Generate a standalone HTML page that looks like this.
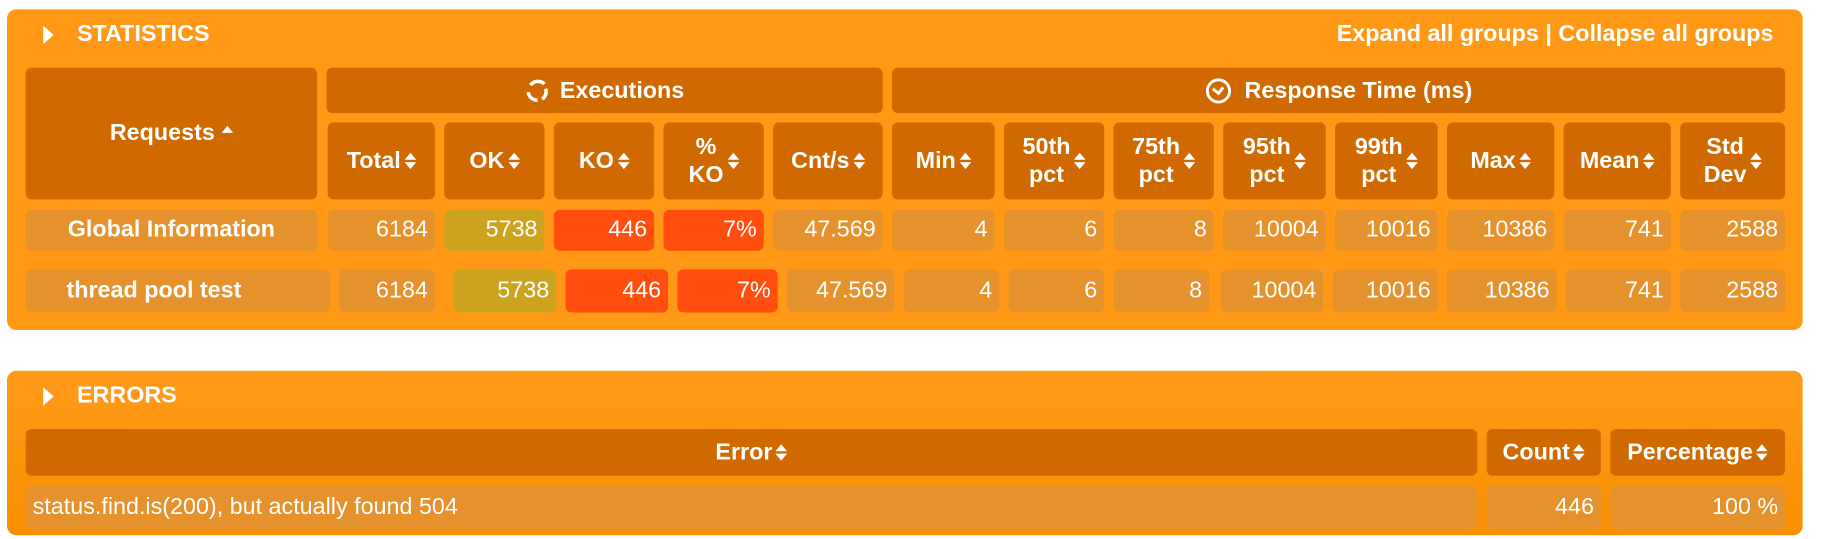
<!DOCTYPE html>
<html><head><meta charset="utf-8"><style>
html,body{margin:0;padding:0;background:#fff;width:1832px;height:538px;overflow:hidden}
#w{position:absolute;left:0;top:0;width:1572px;height:462px;transform:scale(1.166);transform-origin:0 0;font-family:"Liberation Sans",Arial,sans-serif;color:#fff}
.p{position:absolute;background:#ff9915;border-radius:8px}
.c{position:absolute;border-radius:5px;display:flex;align-items:center;box-sizing:border-box;font-size:20px;white-space:nowrap}
.h{background:#d06a00;font-weight:bold;justify-content:center;text-align:center;line-height:24px}
.d{background:#e5922c;justify-content:flex-end;padding-right:6px}
.ok{background:#cba31f}.ko{background:#ff4e0d}
.t{position:absolute;font-weight:bold;font-size:20px}
.s{display:inline-block;width:10px;height:14px;vertical-align:-1px;margin-left:3px;position:relative}
.s:before{content:"";position:absolute;left:0;top:0;border:5px solid transparent;border-top:0;border-bottom:6px solid #fff}
.s:after{content:"";position:absolute;left:0;top:8px;border:5px solid transparent;border-bottom:0;border-top:6px solid #fff}
.tri{position:absolute;width:0;height:0;border-top:8px solid transparent;border-bottom:8px solid transparent;border-left:9px solid #fff}
</style></head><body><div id="w">
<div class="p" style="left:6px;top:8px;width:1540px;height:275px"></div>
<div class="tri" style="left:37px;top:22px"></div>
<div class="t" style="left:66px;top:18px">STATISTICS</div>
<div class="t" style="right:51px;top:18px">Expand all groups | Collapse all groups</div>

<div class="c h" style="left:22px;top:58px;width:250px;height:113px;align-items:flex-start;padding-top:44px">Requests&nbsp;<span style="display:inline-block;border:5px solid transparent;border-top:0;border-bottom:6px solid #fff;margin-top:6px"></span></div>
<div class="c h" style="left:280px;top:58px;width:477px;height:39px"><svg width="22" height="22" viewBox="0 0 22 22" style="margin-right:8px"><path d="M5 6 A8 8 0 0 1 17 5 M18 9 A8 8 0 0 1 15 18 M11 19 A8 8 0 0 1 3 12" fill="none" stroke="#fff" stroke-width="3"/></svg>Executions</div>
<div class="c h" style="left:765px;top:58px;width:766px;height:39px"><svg width="24" height="24" viewBox="0 0 24 24" style="margin-right:10px"><circle cx="12" cy="12" r="9.5" fill="none" stroke="#fff" stroke-width="2.5"/><path d="M7 10 L12 14 L16 9" fill="none" stroke="#fff" stroke-width="2.5"/></svg>Response Time (ms)</div>

<div class="c h" style="left:281px;top:105px;width:92px;height:66px">Total<span class="s"></span></div>
<div class="c h" style="left:381px;top:105px;width:86px;height:66px">OK<span class="s"></span></div>
<div class="c h" style="left:475px;top:105px;width:86px;height:66px">KO<span class="s"></span></div>
<div class="c h" style="left:569px;top:105px;width:86px;height:66px">%<br>KO<span class="s"></span></div>
<div class="c h" style="left:663px;top:105px;width:94px;height:66px">Cnt/s<span class="s"></span></div>
<div class="c h" style="left:765px;top:105px;width:88px;height:66px">Min<span class="s"></span></div>
<div class="c h" style="left:861px;top:105px;width:86px;height:66px">50th<br>pct<span class="s"></span></div>
<div class="c h" style="left:955px;top:105px;width:86px;height:66px">75th<br>pct<span class="s"></span></div>
<div class="c h" style="left:1049px;top:105px;width:88px;height:66px">95th<br>pct<span class="s"></span></div>
<div class="c h" style="left:1145px;top:105px;width:88px;height:66px">99th<br>pct<span class="s"></span></div>
<div class="c h" style="left:1241px;top:105px;width:92px;height:66px">Max<span class="s"></span></div>
<div class="c h" style="left:1341px;top:105px;width:92px;height:66px">Mean<span class="s"></span></div>
<div class="c h" style="left:1441px;top:105px;width:90px;height:66px">Std<br>Dev<span class="s"></span></div>

<div class="c d" style="left:22px;top:180px;width:250px;height:35px;justify-content:center;font-weight:bold;padding:0">Global Information</div>
<div class="c d" style="left:281px;top:180px;width:92px;height:35px">6184</div>
<div class="c d ok" style="left:381px;top:180px;width:86px;height:35px">5738</div>
<div class="c d ko" style="left:475px;top:180px;width:86px;height:35px">446</div>
<div class="c d ko" style="left:569px;top:180px;width:86px;height:35px">7%</div>
<div class="c d" style="left:663px;top:180px;width:94px;height:35px">47.569</div>
<div class="c d" style="left:765px;top:180px;width:88px;height:35px">4</div>
<div class="c d" style="left:861px;top:180px;width:86px;height:35px">6</div>
<div class="c d" style="left:955px;top:180px;width:86px;height:35px">8</div>
<div class="c d" style="left:1049px;top:180px;width:88px;height:35px">10004</div>
<div class="c d" style="left:1145px;top:180px;width:88px;height:35px">10016</div>
<div class="c d" style="left:1241px;top:180px;width:92px;height:35px">10386</div>
<div class="c d" style="left:1341px;top:180px;width:92px;height:35px">741</div>
<div class="c d" style="left:1441px;top:180px;width:90px;height:35px">2588</div>

<div class="c d" style="left:22px;top:231px;width:261px;height:37px;justify-content:flex-start;padding-left:35px;font-weight:bold">thread pool test</div>
<div class="c d" style="left:291px;top:231px;width:82px;height:37px">6184</div>
<div class="c d ok" style="left:389px;top:231px;width:88px;height:37px">5738</div>
<div class="c d ko" style="left:485px;top:231px;width:88px;height:37px">446</div>
<div class="c d ko" style="left:581px;top:231px;width:86px;height:37px">7%</div>
<div class="c d" style="left:675px;top:231px;width:92px;height:37px">47.569</div>
<div class="c d" style="left:775px;top:231px;width:82px;height:37px">4</div>
<div class="c d" style="left:865px;top:231px;width:82px;height:37px">6</div>
<div class="c d" style="left:955px;top:231px;width:82px;height:37px">8</div>
<div class="c d" style="left:1047px;top:231px;width:88px;height:37px">10004</div>
<div class="c d" style="left:1143px;top:231px;width:90px;height:37px">10016</div>
<div class="c d" style="left:1241px;top:231px;width:94px;height:37px">10386</div>
<div class="c d" style="left:1343px;top:231px;width:90px;height:37px">741</div>
<div class="c d" style="left:1441px;top:231px;width:90px;height:37px">2588</div>

<div class="p" style="left:6px;top:318px;width:1540px;height:141px;background:linear-gradient(#ff9a1a,#f98f00)"></div>
<div class="tri" style="left:37px;top:332px"></div>
<div class="t" style="left:66px;top:328px">ERRORS</div>
<div class="c h" style="left:22px;top:368px;width:1245px;height:40px">Error<span class="s"></span></div>
<div class="c h" style="left:1275px;top:368px;width:98px;height:40px">Count<span class="s"></span></div>
<div class="c h" style="left:1381px;top:368px;width:150px;height:40px">Percentage<span class="s"></span></div>
<div class="c d" style="left:22px;top:416px;width:1245px;height:38px;justify-content:flex-start;padding-left:6px">status.find.is(200), but actually found 504</div>
<div class="c d" style="left:1275px;top:416px;width:98px;height:38px">446</div>
<div class="c d" style="left:1381px;top:416px;width:150px;height:38px">100 %</div>
</div></body></html>
